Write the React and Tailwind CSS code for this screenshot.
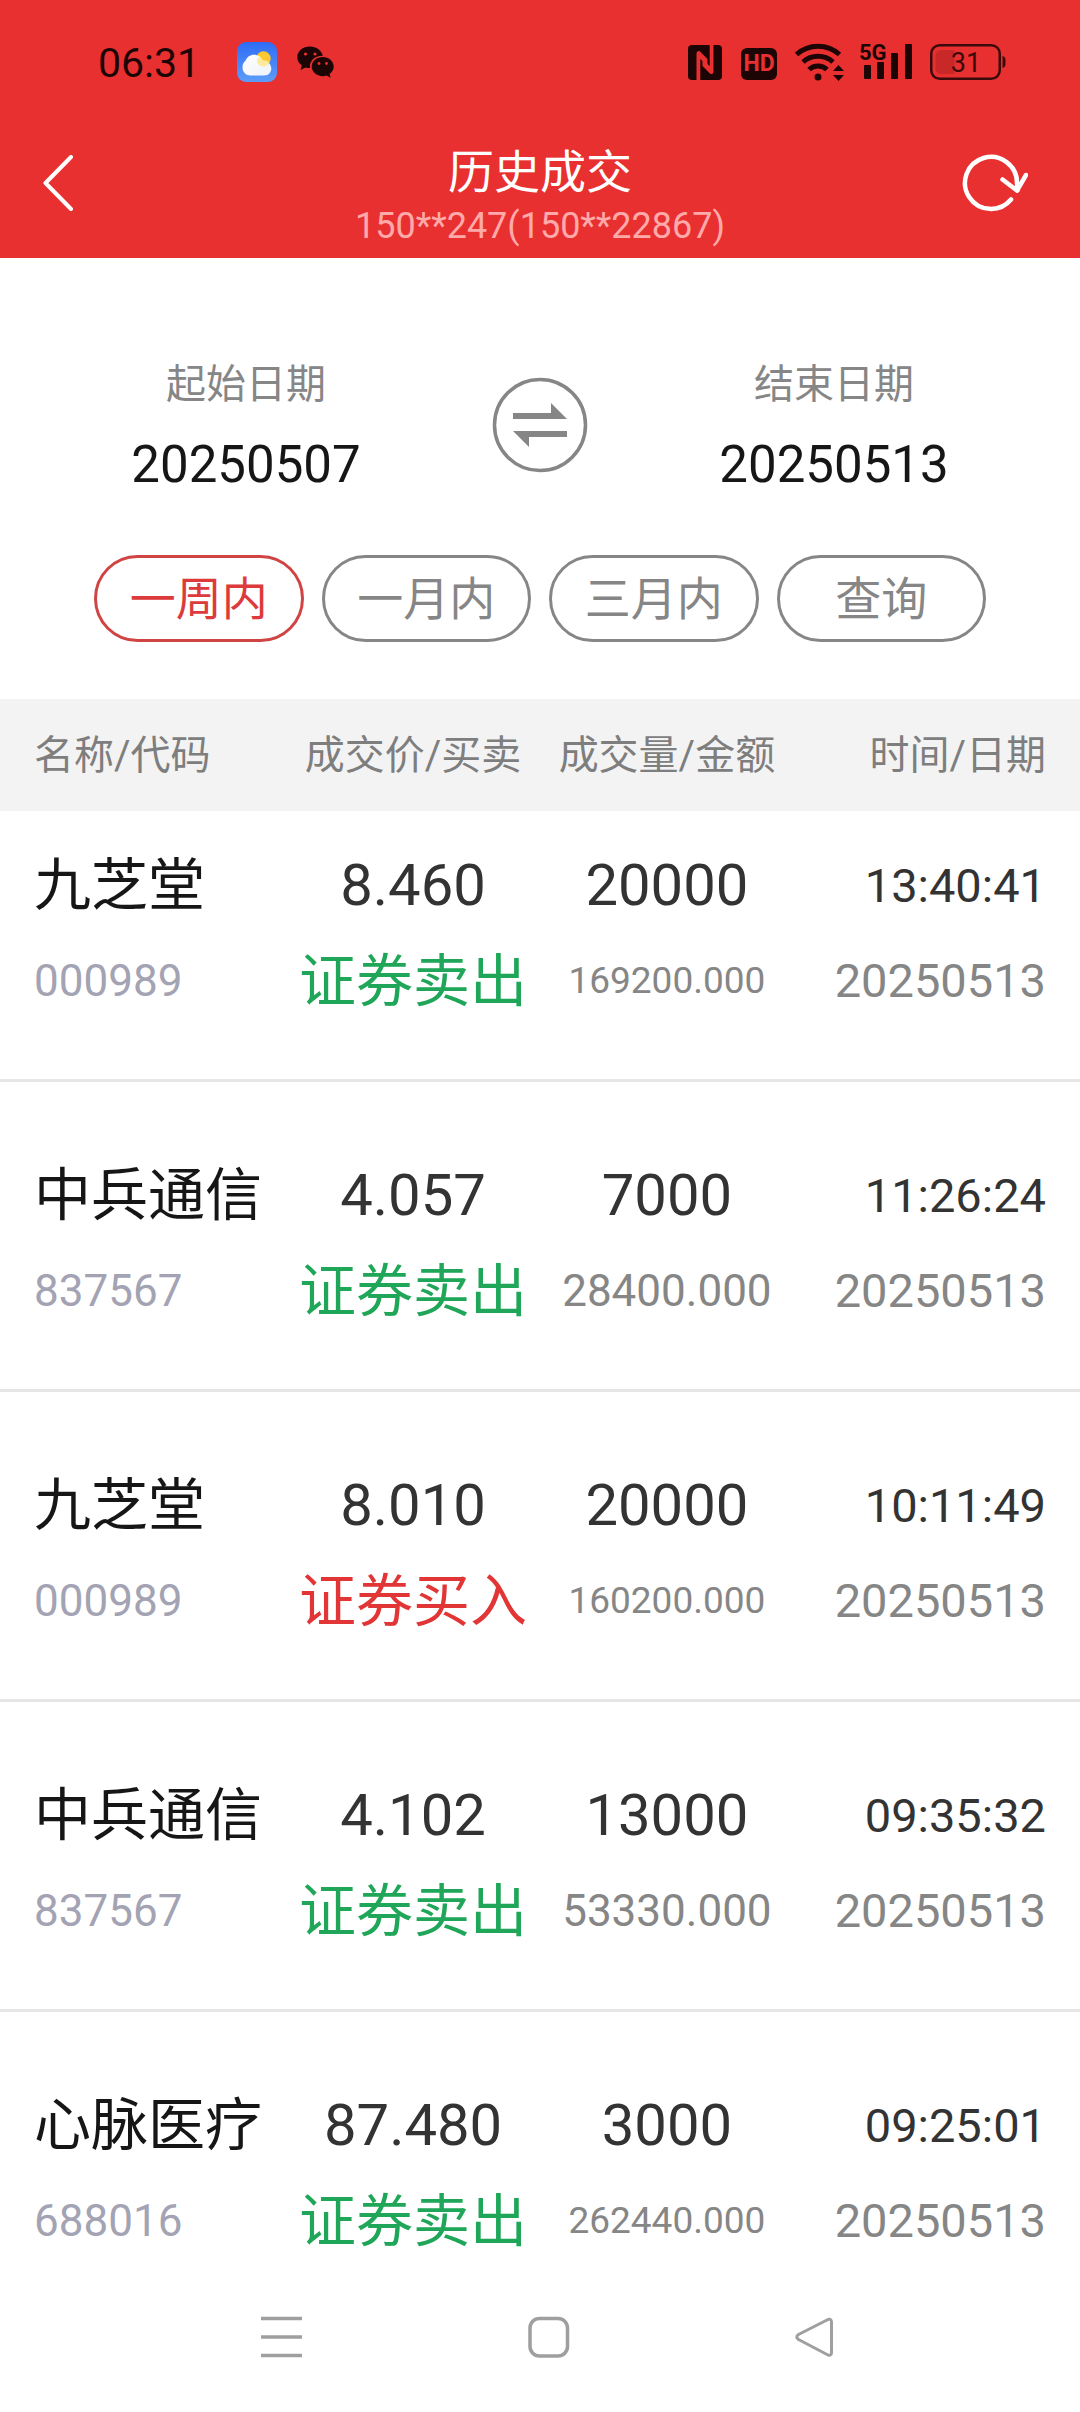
import React, { useState } from "react";

const trades = [
  { name: "九芝堂", code: "000989", price: "8.460", side: "证券卖出", volume: "20000", amount: "169200.000", time: "13:40:41", date: "20250513" },
  { name: "中兵通信", code: "837567", price: "4.057", side: "证券卖出", volume: "7000", amount: "28400.000", time: "11:26:24", date: "20250513" },
  { name: "九芝堂", code: "000989", price: "8.010", side: "证券买入", volume: "20000", amount: "160200.000", time: "10:11:49", date: "20250513" },
  { name: "中兵通信", code: "837567", price: "4.102", side: "证券卖出", volume: "13000", amount: "53330.000", time: "09:35:32", date: "20250513" },
  { name: "心脉医疗", code: "688016", price: "87.480", side: "证券卖出", volume: "3000", amount: "262440.000", time: "09:25:01", date: "20250513" },
];

const ranges = ["一周内", "一月内", "三月内", "查询"];

function WeatherIcon() {
  return (
    <svg className="h-10 w-10" viewBox="0 0 40 40" aria-label="天气">
      <defs>
        <linearGradient id="sky" x1="0" y1="0" x2="0" y2="1">
          <stop offset="0" stopColor="#2f6cf6" />
          <stop offset="1" stopColor="#5c9df8" />
        </linearGradient>
        <linearGradient id="cloud" x1="0" y1="0" x2="1" y2="1">
          <stop offset="0" stopColor="#ffffff" />
          <stop offset="1" stopColor="#eef3fb" />
        </linearGradient>
      </defs>
      <rect width="40" height="40" rx="9" fill="url(#sky)" />
      <circle cx="26.500" cy="16.500" r="7.200" fill="#fdc92e" />
      <path d="M13.500 33.500C9 33.500 5.500 30 5.500 25.500 5.500 22 7 20 8.500 18.800 10 15 13 12.800 17 12.800c4 0 7 2.200 8.500 5.700 5 .5 8.800 3.500 8.800 8 0 4.200-3 7-7 7z" fill="url(#cloud)" />
      <path d="M20 19.500c.8 3 3.300 5 6.500 5 2.800 0 5-1.500 6.200-3.800-1.800-1.400-4.200-2.100-7.200-2.200-.7-1.700-1.800-3-3-4-1.800 1.200-2.700 3-2.500 5z" fill="#fde9a0" />
    </svg>
  );
}

function WeChatIcon() {
  return (
    <svg className="h-8 w-[38px]" viewBox="0 0 38 32" fill="#1d0505" aria-label="微信">
      <path d="M13 0.500C5.800 0.500 0.300 5.200 0.300 11.200c0 3.400 1.800 6.300 4.500 8.200L3.600 24l5-2.500c1.300.4 2.700.6 4.400.6C12 15 18 9.500 25.800 9.800 24.500 4.300 19.300.5 13 .5z" />
      <path d="M25.700 11C19.600 11 14.700 15.200 14.700 20.600s4.900 9.600 11 9.600c1.300 0 2.600-.2 3.800-.6l4.200 2.200-1.100-3.800c2.500-1.800 4.100-4.400 4.100-7.400C36.700 15.200 31.800 11 25.700 11z" />
      <g fill="#e93030">
        <circle cx="8.500" cy="8" r="1.600" />
        <circle cx="18" cy="8" r="1.600" />
        <circle cx="22" cy="17.500" r="1.400" />
        <circle cx="29.500" cy="17.500" r="1.400" />
      </g>
    </svg>
  );
}

function NfcIcon() {
  return (
    <svg className="h-[35px] w-[34px]" viewBox="0 0 34 35" aria-label="NFC">
      <rect width="34" height="35" rx="4" fill="#1d0505" />
      <g fill="#e93030">
        <path d="M8.500 35V8.500q0-3 3-2.500L19.500 14v6.500L12.300 14V35z" />
        <path d="M25.500 0V26.500q0 3-3 2.500L14.500 21v-6.500L21.700 21V0z" />
      </g>
    </svg>
  );
}

function WifiIcon() {
  return (
    <svg className="h-10 w-[50px]" viewBox="0 0 50 40" aria-label="Wi-Fi">
      <g fill="none" stroke="#1d0505" strokeWidth="5">
        <path d="M1.500 12.500a32 32 0 0 1 43 0" />
        <path d="M8 20a22.500 22.500 0 0 1 30 0" />
        <path d="M14 27.500a13 13 0 0 1 18 0" />
      </g>
      <circle cx="23" cy="35" r="3.500" fill="#1d0505" />
      <path d="M38 29l5.500-6 5.500 6zM38 33l5.500 6 5.500-6z" fill="#1d0505" />
    </svg>
  );
}

function SignalIcon() {
  return (
    <svg className="h-11 w-[53px] overflow-visible" viewBox="0 0 53 44" fill="#1d0505" aria-label="5G">
      <text x="-1" y="20" fontSize="22" fontWeight="700" fontFamily="Roboto, sans-serif">5G</text>
      <rect x="4" y="25" width="7" height="14" rx="1" />
      <rect x="17" y="22" width="7" height="17" rx="1" />
      <rect x="31" y="13" width="7" height="26" rx="1" />
      <rect x="45" y="4" width="7" height="35" rx="1" />
    </svg>
  );
}

function BatteryIcon() {
  return (
    <svg className="h-9 w-[76px]" viewBox="0 0 76 36" aria-label="31%">
      <rect x="1.250" y="1.250" width="68.500" height="33.500" rx="8.500" fill="none" stroke="#3c0a0a" strokeWidth="2.500" />
      <path d="M24.500 6V30H11a5.500 5.500 0 0 1-5.500-5.500v-13A5.500 5.500 0 0 1 11 6z" fill="#c92828" />
      <path d="M72.500 12a4 4 0 0 1 3 4v4a4 4 0 0 1-3 4z" fill="#3c0a0a" />
      <text x="36" y="28" textAnchor="middle" fontSize="27" fill="#3c0a0a" fontFamily="Roboto, sans-serif">31</text>
    </svg>
  );
}

function StatusBar() {
  return (
    <div className="flex h-[124px] items-center justify-between pl-[98px] pr-[74px]">
      <div className="flex items-center">
        <span className="w-[139px] pt-[2px] text-[41px] leading-[48px] text-[#1d0505]">06:31</span>
        <WeatherIcon />
        <span className="w-5" />
        <WeChatIcon />
      </div>
      <div className="flex items-center">
        <NfcIcon />
        <span className="ml-[19px] mt-[3px] flex h-8 w-9 items-center justify-center rounded-md bg-[#1d0505] text-[23px] font-bold leading-none text-[#e93030]">
          HD
        </span>
        <span className="w-[18px]" />
        <WifiIcon />
        <span className="w-[15px]" />
        <SignalIcon />
        <span className="w-[17px]" />
        <BatteryIcon />
      </div>
    </div>
  );
}

function TitleBar() {
  return (
    <div className="flex h-[134px] items-start justify-between px-9">
      <button type="button" aria-label="返回" className="flex h-[118px] w-[88px] items-center">
        <svg className="h-14 w-11" viewBox="0 0 44 56" fill="none" stroke="#fff" strokeWidth="4" strokeLinecap="round" strokeLinejoin="round">
          <path d="M35 2L9.500 28 35 54" />
        </svg>
      </button>
      <div className="flex flex-col items-center pt-5">
        <h1 className="text-[46px] leading-[56px] text-white">历史成交</h1>
        <p className="text-[36px] leading-[52px] text-[#ffaaaa]">150**247(150**22867)</p>
      </div>
      <button type="button" aria-label="刷新" className="flex h-[118px] w-[88px] items-center">
        <svg className="h-16 w-[72px]" viewBox="0 0 72 64" fill="none" stroke="#fff" strokeWidth="4.500" strokeLinecap="round" strokeLinejoin="round">
          <path d="M55 48.500A26 26 0 1 1 61 32L61.500 39.500" />
          <path d="M46.500 28.500L61 39.500 70 24" />
        </svg>
      </button>
    </div>
  );
}

function DateField({ id, label, value }) {
  return (
    <label htmlFor={id} className="flex flex-col items-center pt-[2px]">
      <span className="text-[40px] leading-[56px] text-[#868686]">{label}</span>
      <input
        id={id}
        type="text"
        defaultValue={value}
        className="mt-4 h-[72px] w-[304px] bg-transparent text-center text-[51px] text-[#161616] outline-none"
      />
    </label>
  );
}

function SwapIcon() {
  return (
    <svg className="h-24 w-24" viewBox="0 0 96 96">
      <circle cx="48" cy="48" r="45.500" fill="none" stroke="#868686" strokeWidth="3.500" />
      <path d="M21 36H59V26L75 42H21z" fill="#868686" />
      <path d="M75 60H37V70L21 54H75z" fill="#868686" />
    </svg>
  );
}

function Filters() {
  const [active, setActive] = useState(0);
  return (
    <section className="px-[94px] pb-[57px] pt-[97px]">
      <div className="flex items-start justify-between">
        <DateField id="start-date" label="起始日期" value="20250507" />
        <button type="button" aria-label="交换日期" className="mt-[22px]">
          <SwapIcon />
        </button>
        <DateField id="end-date" label="结束日期" value="20250513" />
      </div>
      <div className="mt-[54px] grid grid-cols-4 gap-[18px]">
        {ranges.map((label, i) => (
          <button
            key={label}
            type="button"
            onClick={() => setActive(i)}
            className={
              "h-[87px] rounded-full border-3 text-[46px] leading-none " +
              (i === active ? "border-[#d04444] text-[#dd3b3b]" : "border-[#868686] text-[#868686]")
            }
          >
            {label}
          </button>
        ))}
      </div>
    </section>
  );
}

function TradeTable() {
  return (
    <table className="w-full table-fixed border-collapse">
      <colgroup>
        <col className="w-[26.5%]" />
        <col className="w-[23.5%]" />
        <col className="w-[23.5%]" />
        <col className="w-[26.5%]" />
      </colgroup>
      <thead>
        <tr className="h-28 whitespace-nowrap bg-[#f3f3f3] text-[40px] leading-[56px] text-[#7e7e7e]">
          <th className="pl-[34px] pt-[2px] text-left font-normal">名称/代码</th>
          <th className="pt-[2px] font-normal">成交价/买卖</th>
          <th className="pt-[2px] font-normal">成交量/金额</th>
          <th className="pr-[34px] pt-[2px] text-right font-normal">时间/日期</th>
        </tr>
      </thead>
      <tbody>
        {trades.map((t, i) => {
          const pad = i === 0 ? "pb-[50px] pt-[26px]" : "pb-[50px] pt-[65px]";
          return (
            <tr key={t.time} className="whitespace-nowrap border-b-3 border-[#e6e6e6] align-top">
              <td className={"pl-[34px] " + pad}>
                <div className="h-24 text-[57px] leading-[98px] text-[#161616]">{t.name}</div>
                <div className="h-24 text-[44px] leading-[96px] text-[#a3a3b3]">{t.code}</div>
              </td>
              <td className={"text-center " + pad}>
                <div className="h-24 text-[58px] leading-[96px] text-[#333333]">{t.price}</div>
                <div className={"h-24 text-[57px] leading-[98px] " + (t.side === "证券买入" ? "text-[#e23636]" : "text-[#1fa658]")}>
                  {t.side}
                </div>
              </td>
              <td className={"text-center " + pad}>
                <div className="h-24 text-[58px] leading-[96px] text-[#333333]">{t.volume}</div>
                <div className={"h-24 leading-[96px] text-[#868686] " + (t.amount.length > 9 ? "text-[37px]" : "text-[44px]")}>
                  {t.amount}
                </div>
              </td>
              <td className={"pr-[34px] text-right text-[47px] " + pad}>
                <div className="h-24 leading-[98px] text-[#333333]">{t.time}</div>
                <div className="h-24 leading-[96px] text-[#868686]">{t.date}</div>
              </td>
            </tr>
          );
        })}
      </tbody>
    </table>
  );
}

function NavBar() {
  return (
    <nav className="flex h-32 shrink-0 items-start justify-between bg-white pl-[260px] pr-[243px] pt-[31px]">
      <button type="button" aria-label="最近任务">
        <svg className="h-11 w-11" viewBox="0 0 44 44" stroke="#9f9f9f" strokeWidth="3.500">
          <path d="M1 3.500H42M1 22H42M1 40.500H42" />
        </svg>
      </button>
      <button type="button" aria-label="主屏幕">
        <svg className="h-11 w-11" viewBox="0 0 44 44" fill="none" stroke="#9f9f9f" strokeWidth="3.500">
          <rect x="3" y="3.500" width="37.500" height="37.500" rx="9.500" />
        </svg>
      </button>
      <button type="button" aria-label="返回">
        <svg className="h-11 w-11" viewBox="0 0 44 44" fill="none" stroke="#9f9f9f" strokeWidth="3" strokeLinejoin="round">
          <path d="M35 4.500L5.500 19.500Q2 22 5.500 24.500L35 40Q38.500 41 38.500 37.500V7Q38.500 3.500 35 4.500z" />
        </svg>
      </button>
    </nav>
  );
}

export default function App() {
  return (
    <div className="flex h-screen flex-col overflow-hidden bg-white font-['Roboto','Noto_Sans_CJK_SC',sans-serif]">
      <header className="shrink-0 bg-[#e93030]">
        <StatusBar />
        <TitleBar />
      </header>
      <main className="min-h-0 flex-1 overflow-hidden">
        <Filters />
        <TradeTable />
      </main>
      <NavBar />
    </div>
  );
}
